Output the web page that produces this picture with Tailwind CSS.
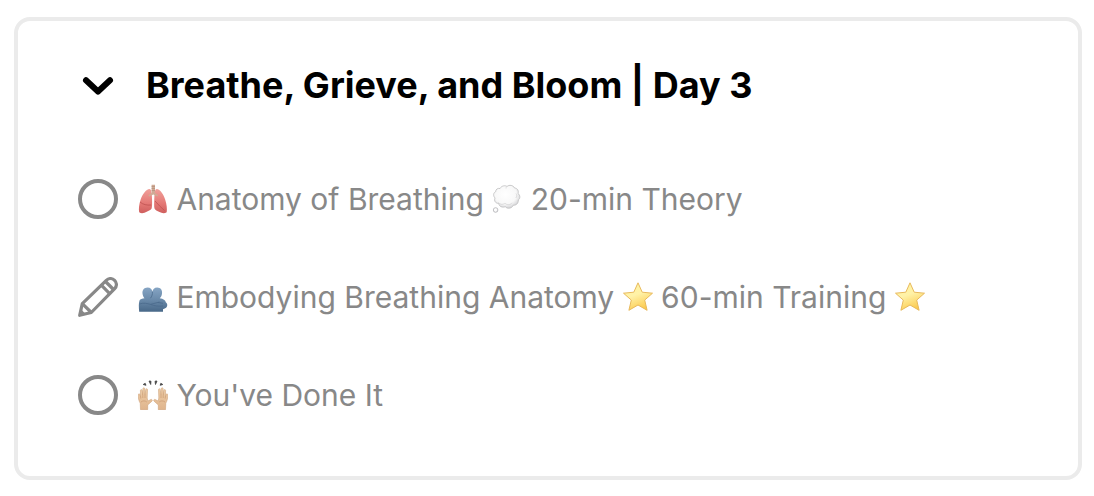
<!DOCTYPE html>
<html lang="en">
<head>
    <meta charset="UTF-8">
    <meta name="viewport" content="width=device-width, initial-scale=1.0">
    <title>Breathe, Grieve, and Bloom</title>
    <script src="https://cdn.jsdelivr.net/npm/@tailwindcss/browser@4"></script>
</head>
<body class="bg-white font-['Inter',sans-serif]">
    <!-- Shared gradients and emoji -->
    <svg class="absolute size-0" aria-hidden="true">
        <defs>
            <linearGradient id="lung" x1="0" y1="0" x2="0" y2="1">
                <stop offset="0" stop-color="#f0a09a" />
                <stop offset=".6" stop-color="#e47875" />
                <stop offset="1" stop-color="#cf5f5e" />
            </linearGradient>
            <radialGradient id="cloud" cx=".45" cy=".4" r=".6">
                <stop offset="0" stop-color="#ffffff" />
                <stop offset=".7" stop-color="#f8f8f8" />
                <stop offset="1" stop-color="#d6d6d8" />
            </radialGradient>
            <linearGradient id="people" x1="0" y1="0" x2="0" y2="1">
                <stop offset="0" stop-color="#86a5c4" />
                <stop offset=".5" stop-color="#6a8aaa" />
                <stop offset="1" stop-color="#486888" />
            </linearGradient>
            <linearGradient id="gold" x1=".2" y1="0" x2=".6" y2="1">
                <stop offset="0" stop-color="#fff3a0" />
                <stop offset=".45" stop-color="#fff2a8" />
                <stop offset="1" stop-color="#fbc94c" />
            </linearGradient>
            <linearGradient id="skin" x1="0" y1="0" x2="0" y2="1">
                <stop offset="0" stop-color="#efcfa9" />
                <stop offset="1" stop-color="#dfb48c" />
            </linearGradient>
            <symbol id="star" viewBox="0 0 30 30">
                <path d="M15 .8l4.200 9.400 10.300 1-7.800 6.900 2.400 10.200L15 23 5.900 28.300l2.400-10.200L.5 11.200l10.300-1z" fill="url(#gold)" stroke="#e8b95c" stroke-width="1" stroke-linejoin="round" />
            </symbol>
        </defs>
    </svg>

    <section class="mt-[17px] mb-4 ml-3.5 mr-3 rounded-2xl border-4 border-[#ebebeb] px-[60px] pt-10 pb-[61px]">
        <h2 class="text-4xl leading-[48px] font-bold text-black">
            <button type="button" class="flex items-center gap-7 text-left" aria-expanded="true" aria-controls="lessons">
                <svg class="size-10 shrink-0" viewBox="0 0 40 40" fill="none" stroke="currentColor" stroke-width="6" stroke-linecap="round" stroke-linejoin="round" aria-hidden="true">
                    <path d="M8 15.200L20 26.500 32 15.200" />
                </svg>
                <span>Breathe, Grieve, and Bloom | Day 3</span>
            </button>
        </h2>

        <ul id="lessons" class="mt-[70px] flex flex-col gap-[58px] text-3xl leading-10 text-[#888888]">
            <li>
                <a href="#anatomy" class="flex items-center gap-5">
                    <svg class="size-10 shrink-0" viewBox="0 0 40 40" fill="none" stroke="currentColor" stroke-width="4" aria-hidden="true">
                        <circle cx="20" cy="20" r="18" />
                    </svg>
                    <span>
                        <svg class="inline size-[30px] align-[-4px]" viewBox="0 0 30 30" role="img" aria-label="lungs">
                            <path d="M11.500 5C8 5.500 4.500 10 2.500 16c-1.400 4.500-2 9-1.300 12.200 2.300 1.800 5.300.7 7.500-.5 2-1 4.300-1.600 4.900-3.100.6-1.500.6-6 .4-10C13.800 9 13.500 5 11.500 5z" fill="url(#lung)" />
                            <path d="M18.700 5c3.500.5 6.800 5 8.600 11 1.400 4.500 1.900 9 1.400 12.200-2.300 1.800-5 1.100-7.200-.1-2.200-1.200-4.500-1.900-5-3.600-.5-1.800-.4-6-.2-10C16.600 9 16.800 5 18.700 5z" fill="url(#lung)" />
                            <path d="M2 18c3 2.600 7 3.500 11 3M17 17c3 3.500 6 6.500 9.500 9.500" fill="none" stroke="#bd5050" stroke-width=".8" />
                            <path d="M13.600.8H17v8.300l3 2-.6 1.500-4.100-2.200-4.200 2.200-.7-1.400 3.200-2.100z" fill="#d0ab96" />
                            <path d="M13.600 2.500H17M13.600 4.500H17M13.600 6.500H17" stroke="#ad8876" stroke-width=".6" />
                        </svg>
                        Anatomy of Breathing
                        <svg class="inline size-[30px] align-[-4px]" viewBox="0 0 30 30" role="img" aria-label="thought balloon">
                            <path d="M8 4.500C9.500 1.800 13 1 15 2.500c2-2 6.500-1.300 7.500 1.500 3 .2 4.500 3 3.500 5.500 2.300 1.500 2.500 5 .3 6.500.2 3.500-2.300 5.500-5 5.200-1.300 3.300-5.800 4-8 1.500-3 1.200-6.300-.3-6.600-3.300-3.200.2-5-2.900-3.600-5.400C.9 12 1.300 8.500 3.700 7.700c-.2-2.200 2.100-3.900 4.300-3.200z" fill="url(#cloud)" stroke="#bcbcbe" stroke-width=".8" />
                            <path d="M6.500 18.500c2 2.600 5 2 6.500.7 2.200 2.300 5.600 1.800 7-.4M24 9.500c1 1.500 1 3-.2 4.500M15 2.500c-.8.600-1 1.300-1 2" fill="none" stroke="#d4d4d6" stroke-width=".8" />
                            <circle cx="3.600" cy="26" r="2.300" fill="url(#cloud)" stroke="#b4b4b7" stroke-width=".8" />
                        </svg>
                        20-min Theory
                    </span>
                </a>
            </li>
            <li>
                <a href="#embodying" class="flex items-center gap-5">
                    <svg class="size-10 shrink-0" viewBox="0 0 40 40" fill="none" stroke="currentColor" stroke-width="3.200" stroke-linejoin="round" aria-hidden="true">
                        <path d="M1.700 38.300L4.300 26.700 28.300 3.300c2.400-2.300 5.900-2.300 8.300 0s2.400 5.900.1 8.300L13.300 35.500z" />
                        <path d="M4.300 26.700l9 8.800M23.300 8.200l8.600 8.600M27.500 4.500l8 8" />
                        <path d="M1.500 38.500l1.400-6.300 4.800 4.800z" fill="currentColor" stroke="none" />
                    </svg>
                    <span>
                        <svg class="inline size-[30px] align-[-4px]" viewBox="0 0 30 30" role="img" aria-label="people hugging">
                            <path d="M9.500 5.500c3 0 4.600 1.800 4.900 4.200.4-2.400 2-4.200 4.800-4.200 3.600 0 5.300 2.800 4.800 6-.2 2-1 3.600-2.200 4.800 3.600.7 5.600 1.800 6 4 1.600 1.100 1.900 3.300.9 4.700-.7 1.100-2.100 1.800-3.700 2.200V29.700H1.200C.7 25 .6 21 1.500 18.500c.7-1.500 2.700-2 5-2.300-1.200-1.200-1.800-2.900-2-4.700-.4-3.200 1.400-6 5-6z" fill="url(#people)" />
                            <path d="M14.400 9.700c.2 2.500-.5 4.700-1.900 6.500M1.500 22c4-1.500 8-.5 11 .4l9-2.400M12.500 22.400c4 1.600 8 2.100 12.500 1.600M20 20.500l5 .8" fill="none" stroke="#4a6a8c" stroke-width=".8" />
                        </svg>
                        Embodying Breathing Anatomy
                        <svg class="inline size-[30px] align-[-4px]" role="img" aria-label="star"><use href="#star" /></svg>
                        60-min Training
                        <svg class="inline size-[30px] align-[-4px]" role="img" aria-label="star"><use href="#star" /></svg>
                    </span>
                </a>
            </li>
            <li>
                <a href="#done" class="flex items-center gap-5">
                    <svg class="size-10 shrink-0" viewBox="0 0 40 40" fill="none" stroke="currentColor" stroke-width="4" aria-hidden="true">
                        <circle cx="20" cy="20" r="18" />
                    </svg>
                    <span>
                        <svg class="inline size-[30px] align-[-4px]" viewBox="0 0 30 30" role="img" aria-label="raising hands">
                            <g id="hand">
                                <path d="M2.500 29.700l-.3-6.500C.8 21 0 17.500.3 14.500c.2-1 1.400-1 1.600 0l.7 2.500-.2-6.500c.1-1.200 1.600-1.200 1.800 0l.5 4.500.2-6.300c.1-1.300 1.700-1.300 1.900 0l.2 6.300.8-5.500c.2-1.200 1.700-1 1.700.2l-.3 8.300.6 3 3-1.500c1.200-.5 2 .8 1.100 1.700L9.700 25v4.700z" fill="url(#skin)" stroke="#c99b70" stroke-width=".5" />
                                <path d="M2.700 17v1.500M4.800 15v3M7 15v3M3 22c2-1.500 4-1.500 5.800 0" fill="none" stroke="#c4926a" stroke-width=".6" />
                            </g>
                            <use href="#hand" transform="matrix(-1 0 0 1 30 0)" />
                            <path d="M5.200 4.500l2-1.200.8 2zM11 1l2 .2-.3 3.300zM17 1.200l2-.2-1.500 3.500zM22.800 3.300l2 1.200-2.600.8z" fill="#444444" stroke="#444444" stroke-width=".8" stroke-linejoin="round" />
                        </svg>
                        You've Done It
                    </span>
                </a>
            </li>
        </ul>
    </section>
</body>
</html>
